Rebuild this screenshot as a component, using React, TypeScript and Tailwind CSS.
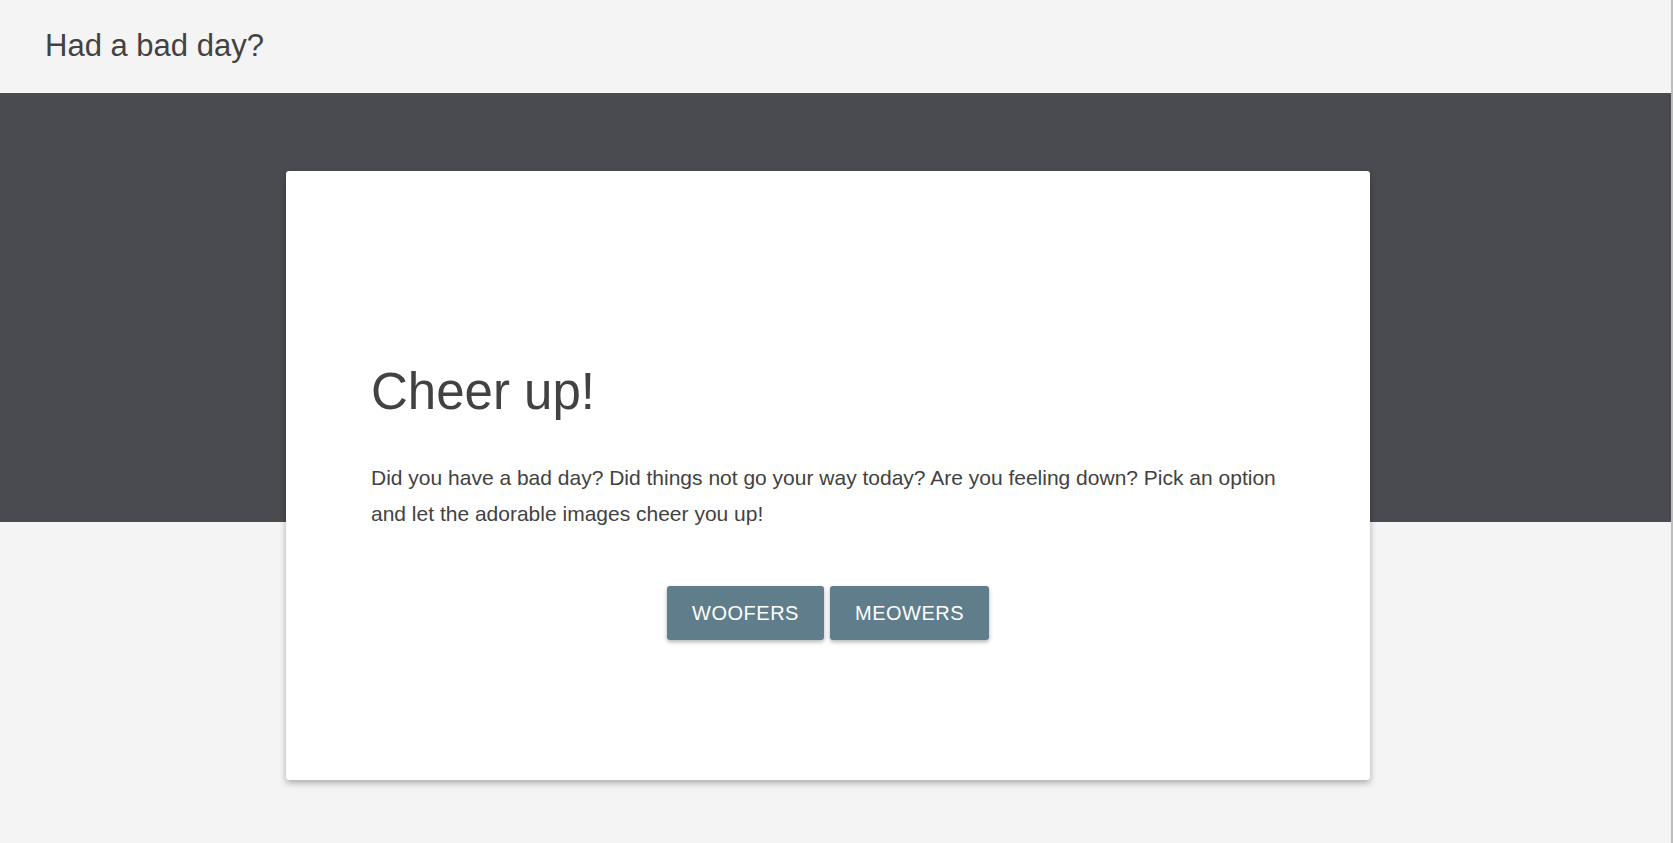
export default function App() {
  const font = { fontFamily: '"Liberation Sans", Arial, sans-serif' };

  return (
    <div className="flex min-h-screen bg-[#f4f4f4]" style={font}>
      <div className="flex-1">
        <header className="flex h-[93px] items-center pl-[45px]">
          <h1 className="text-[31px] text-[#424242]">Had a bad day?</h1>
        </header>

        <section className="h-[429px] bg-[#4a4b51] pt-[78px]">
          <div className="relative z-10 ml-[286px] w-[1084px] rounded-[3px] bg-white px-[85px] pt-[193px] pb-[140px] shadow-[0_3px_6px_rgba(0,0,0,0.3)]">
            <h2 className="text-[51px] leading-[56px] text-[#424242]">Cheer up!</h2>
            <p className="mt-[40px] text-[21px] leading-[36px] text-[#424242]">
              Did you have a bad day? Did things not go your way today? Are you feeling down? Pick an
              option and let the adorable images cheer you up!
            </p>
            <div className="mt-[54px] flex justify-center gap-[6px]">
              <button
                type="button"
                className="flex h-[54px] w-[157px] items-center justify-center rounded-[3px] bg-[#607d8b] text-[20px] tracking-[0.5px] text-white shadow-[0_2px_4px_rgba(0,0,0,0.3)]"
              >
                WOOFERS
              </button>
              <button
                type="button"
                className="flex h-[54px] w-[159px] items-center justify-center rounded-[3px] bg-[#607d8b] text-[20px] tracking-[0.5px] text-white shadow-[0_2px_4px_rgba(0,0,0,0.3)]"
              >
                MEOWERS
              </button>
            </div>
          </div>
        </section>
      </div>
      <div className="w-[2px] bg-[#bdbdbd]" />
    </div>
  );
}
